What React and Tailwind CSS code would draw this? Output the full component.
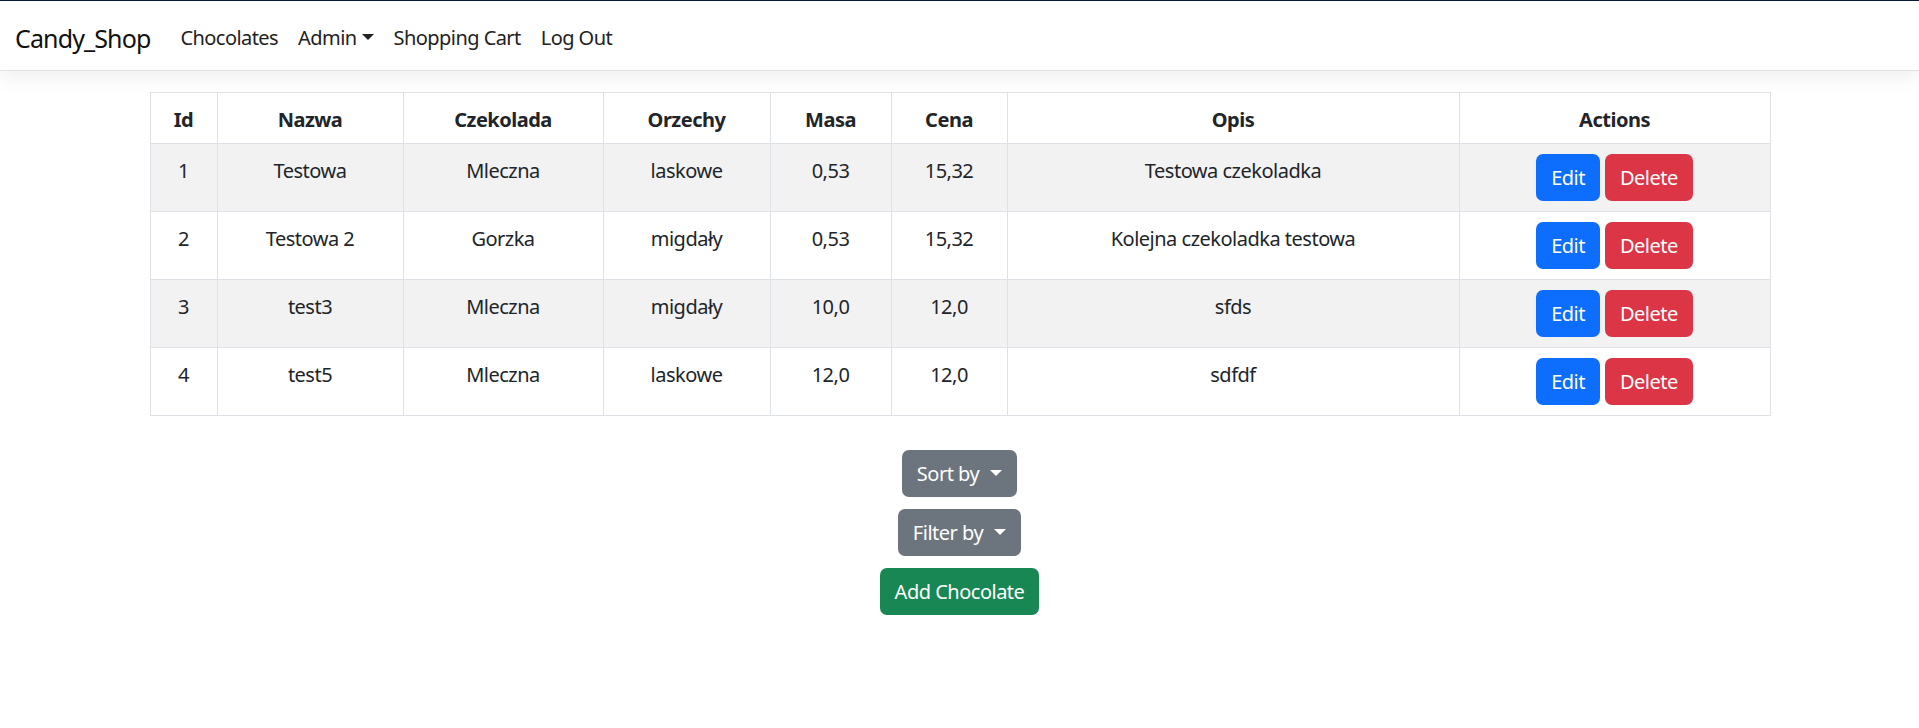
const rows = [
  { id: 1, nazwa: "Testowa", czekolada: "Mleczna", orzechy: "laskowe", masa: "0,53", cena: "15,32", opis: "Testowa czekoladka" },
  { id: 2, nazwa: "Testowa 2", czekolada: "Gorzka", orzechy: "migdały", masa: "0,53", cena: "15,32", opis: "Kolejna czekoladka testowa" },
  { id: 3, nazwa: "test3", czekolada: "Mleczna", orzechy: "migdały", masa: "10,0", cena: "12,0", opis: "sfds" },
  { id: 4, nazwa: "test5", czekolada: "Mleczna", orzechy: "laskowe", masa: "12,0", cena: "12,0", opis: "sdfdf" },
];

function Caret({ gap = "ml-[5px]" }) {
  return (
    <span className={`${gap} inline-block h-0 w-0 border-x-[6px] border-t-[6px] border-x-transparent border-t-current align-[5px]`} />
  );
}

function Navbar() {
  return (
    <nav className="flex h-[71px] items-center border-t border-b border-t-[#0b1736] border-b-[#e2e2e2] bg-white px-[15px] pt-[4px] shadow-[0_8px_18px_rgba(0,0,0,0.06)]">
      <span className="mr-[20px] text-[25px] leading-[36px] tracking-[-0.035em] text-[#111]">Candy_Shop</span>
      <ul className="flex text-[20px] leading-[30px] tracking-[-0.028em] text-[#222]">
        <li className="px-[10px]">Chocolates</li>
        <li className="px-[10px]">
          Admin
          <Caret />
        </li>
        <li className="px-[10px]">Shopping Cart</li>
        <li className="px-[10px]">Log Out</li>
      </ul>
    </nav>
  );
}

const cell = "border border-[#dee2e6] px-[10px] pt-[12px] pb-[8px] text-center align-top";
const actionCell = "border border-[#dee2e6] px-[10px] py-[10px] text-center align-top";

export default function App() {
  return (
    <div className="min-h-screen bg-white font-['Noto_Sans',sans-serif] text-[20px] leading-[30px] tracking-[-0.025em] text-[#212529]">
      <Navbar />
      <div className="mx-auto mt-[21px] max-w-[1650px] px-[15px]">
        <table className="w-full table-fixed border-collapse border border-[#dee2e6]">
          <thead>
            <tr>
              <th className={`${cell} w-[67px] font-bold`}>Id</th>
              <th className={`${cell} w-[186px] font-bold`}>Nazwa</th>
              <th className={`${cell} w-[200px] font-bold`}>Czekolada</th>
              <th className={`${cell} w-[167px] font-bold`}>Orzechy</th>
              <th className={`${cell} w-[121px] font-bold`}>Masa</th>
              <th className={`${cell} w-[116px] font-bold`}>Cena</th>
              <th className={`${cell} w-[452px] font-bold`}>Opis</th>
              <th className={`${cell} w-[311px] font-bold`}>Actions</th>
            </tr>
          </thead>
          <tbody>
            {rows.map((r, i) => (
              <tr key={r.id} className={i % 2 === 0 ? "bg-[#f2f2f2]" : "bg-white"}>
                <td className={cell}>{r.id}</td>
                <td className={cell}>{r.nazwa}</td>
                <td className={cell}>{r.czekolada}</td>
                <td className={cell}>{r.orzechy}</td>
                <td className={cell}>{r.masa}</td>
                <td className={cell}>{r.cena}</td>
                <td className={cell}>{r.opis}</td>
                <td className={actionCell}>
                  <div className="flex justify-center gap-[5px]">
                    <button className="h-[47px] rounded-[7px] bg-[#0d6efd] px-[15px] text-white">Edit</button>
                    <button className="h-[47px] rounded-[7px] bg-[#dc3545] px-[15px] text-white">Delete</button>
                  </div>
                </td>
              </tr>
            ))}
          </tbody>
        </table>

        <div className="mt-[34px] flex flex-col items-center gap-[12px]">
          <button className="h-[47px] rounded-[7px] bg-[#6c757d] px-[15px] text-white">
            Sort by
            <Caret gap="ml-[11px]" />
          </button>
          <button className="h-[47px] rounded-[7px] bg-[#6c757d] px-[15px] text-white">
            Filter by
            <Caret gap="ml-[11px]" />
          </button>
          <button className="h-[47px] rounded-[7px] bg-[#198754] px-[15px] text-white">Add Chocolate</button>
        </div>
      </div>
    </div>
  );
}
